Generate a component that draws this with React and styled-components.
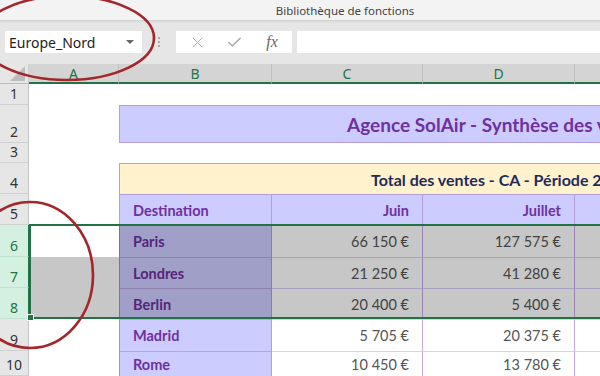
import React from "react";
import styled, { createGlobalStyle, css } from "styled-components";
import { X, Check } from "lucide-react";

const rows = [
  { n: 6, city: "Paris", juin: "66 150 €", juil: "127 575 €" },
  { n: 7, city: "Londres", juin: "21 250 €", juil: "41 280 €" },
  { n: 8, city: "Berlin", juin: "20 400 €", juil: "5 400 €" },
  { n: 9, city: "Madrid", juin: "5 705 €", juil: "20 375 €" },
  { n: 10, city: "Rome", juin: "10 450 €", juil: "13 780 €" },
];

const columns = ["A", "B", "C", "D", ""];
const selectedRows = [6, 7, 8];

const App = () => {
  return (
    <Page>
      <GlobalStyle />
      <TitleBar>Bibliothèque de fonctions</TitleBar>

      <FormulaRow>
        <NameBox>
          <span>Europe_Nord</span>
          <Caret />
        </NameBox>
        <Grip>
          <i />
          <i />
          <i />
        </Grip>
        <FxButtons>
          <IconSlot>
            <X size={17} strokeWidth={1.3} />
          </IconSlot>
          <IconSlot>
            <Check size={17} strokeWidth={2.2} />
          </IconSlot>
          <IconSlot>
            <Fx>fx</Fx>
          </IconSlot>
        </FxButtons>
        <FormulaInput />
      </FormulaRow>

      <SheetStack>
        <Sheet>
          <Corner />
          {columns.map((c, i) => (
            <ColHead key={i} $selected>
              {c}
            </ColHead>
          ))}

          <RowHead>1</RowHead>
          <Blank $span />

          <RowHead>2</RowHead>
          <Blank />
          <TitleCell>Agence SolAir - Synthèse des ventes</TitleCell>

          <RowHead>3</RowHead>
          <Blank $span />

          <RowHead>4</RowHead>
          <Blank />
          <BandCell>Total des ventes - CA - Période 2023</BandCell>

          <RowHead>5</RowHead>
          <Blank />
          <HeadCell $first>Destination</HeadCell>
          <HeadCell $right>Juin</HeadCell>
          <HeadCell $right>Juillet</HeadCell>
          <HeadCell />

          {rows.map((r) => (
            <React.Fragment key={r.n}>
              <RowHead $selected={selectedRows.includes(r.n)}>{r.n}</RowHead>
              <Blank />
              <DestCell>{r.city}</DestCell>
              <ValueCell>{r.juin}</ValueCell>
              <ValueCell>{r.juil}</ValueCell>
              <ValueCell />
            </React.Fragment>
          ))}
        </Sheet>

        <Overlay>
          <Shade $col="2 / 3" $row="8 / 10" />
          <Shade $col="3 / -1" $row="7 / 10" />
          <SelectionFrame />
        </Overlay>
      </SheetStack>

      <Annotations viewBox="0 0 600 376">
        <ellipse cx="67" cy="38" rx="87" ry="42" />
        <ellipse cx="30" cy="275" rx="63" ry="73" />
      </Annotations>
    </Page>
  );
};

const GlobalStyle = createGlobalStyle`
  html, body {
    margin: 0;
    padding: 0;
    background: #ffffff;
    overflow: hidden;
  }
`;

const Page = styled.div`
  position: relative;
  width: 600px;
  height: 376px;
  overflow: hidden;
  font-family: "Noto Sans", "Open Sans", sans-serif;
`;

const TitleBar = styled.div`
  height: 20px;
  background: #f3f3f3;
  color: #444;
  font-size: 11.5px;
  line-height: 22px;
  text-align: center;
  padding-left: 90px;
  box-sizing: border-box;
`;

const FormulaRow = styled.div`
  height: 44px;
  background: #e6e6e6;
  box-shadow: inset 0 3px 3px -2px rgba(0, 0, 0, 0.12);
  display: flex;
  align-items: center;
  padding-left: 5px;
  box-sizing: border-box;
`;

const NameBox = styled.div`
  width: 137px;
  height: 22px;
  background: #fff;
  display: flex;
  align-items: center;
  justify-content: space-between;
  padding: 0 8px 0 4px;
  box-sizing: border-box;
  color: #222;
  font-size: 14px;
`;

const Caret = styled.span`
  width: 0;
  height: 0;
  border-left: 4px solid transparent;
  border-right: 4px solid transparent;
  border-top: 4px solid #666;
`;

const Grip = styled.div`
  width: 34px;
  display: flex;
  flex-direction: column;
  align-items: center;
  gap: 2px;

  i {
    width: 2px;
    height: 2px;
    border-radius: 50%;
    background: #999;
  }
`;

const FxButtons = styled.div`
  width: 116px;
  height: 22px;
  background: #fff;
  display: flex;
  align-items: center;
  justify-content: space-between;
  padding: 0 10px 0 11px;
  box-sizing: border-box;
  color: #a8a8a8;
`;

const IconSlot = styled.span`
  display: flex;
  align-items: center;
  justify-content: center;
  width: 20px;
`;

const Fx = styled.span`
  font-family: "Liberation Serif", serif;
  font-style: italic;
  font-size: 16px;
  color: #666;
`;

const FormulaInput = styled.div`
  flex: 1;
  height: 22px;
  margin-left: 5px;
  background: #fff;
`;

const sheetTemplate = css`
  display: grid;
  grid-template-columns: 29px 90px 153px 151px 152px 1fr;
  grid-template-rows: 20px 21px 38px 20px 31px 31px 32px 31px 31px 32px 25px;
`;

const SheetStack = styled.div`
  display: grid;
  background: #fff;
`;

const Sheet = styled.div`
  ${sheetTemplate}
  grid-area: 1 / 1;
  font-family: "Lato", sans-serif;
`;

const Overlay = styled.div`
  ${sheetTemplate}
  grid-area: 1 / 1;
  pointer-events: none;
`;

const Corner = styled.div`
  background: #e6e6e6;
  border-right: 1px solid #cfcfcf;
  border-bottom: 1px solid #bdbdbd;
  box-sizing: border-box;
  position: relative;

  &::after {
    content: "";
    position: absolute;
    right: 3px;
    bottom: 2px;
    border-left: 15px solid transparent;
    border-bottom: 15px solid #bcbcbc;
  }
`;

const ColHead = styled.div`
  background: ${(p) => (p.$selected ? "#d4d4d4" : "#e6e6e6")};
  color: ${(p) => (p.$selected ? "#217346" : "#444")};
  border-right: 1px solid #c0c0c0;
  border-bottom: 2px solid #217346;
  box-sizing: border-box;
  font-family: "Noto Sans", sans-serif;
  font-size: 14px;
  line-height: 20px;
  text-align: center;
`;

const RowHead = styled.div`
  background: ${(p) => (p.$selected ? "#d3f0e0" : "#e6e6e6")};
  color: ${(p) => (p.$selected ? "#217346" : "#333")};
  border-right: 1px solid ${(p) => (p.$selected ? "#217346" : "#c4c4c4")};
  border-bottom: 1px solid ${(p) => (p.$selected ? "#bfe3cf" : "#d0d0d0")};
  box-sizing: border-box;
  font-family: "Noto Sans", sans-serif;
  font-size: 14px;
  line-height: 1;
  display: flex;
  align-items: flex-end;
  justify-content: center;
  padding-bottom: 3px;
`;

const Blank = styled.div`
  background: #fff;
  grid-column: ${(p) => (p.$span ? "2 / -1" : "auto")};
`;

const TitleCell = styled.div`
  grid-column: 3 / -1;
  background: #ccccff;
  border: 1px solid #b39ddb;
  border-right: none;
  box-sizing: border-box;
  color: #7030a0;
  font-weight: 700;
  font-size: 19px;
  white-space: nowrap;
  overflow: hidden;
  padding-left: 227px;
  display: flex;
  align-items: center;
`;

const BandCell = styled.div`
  grid-column: 3 / -1;
  background: #fff2cc;
  border: 1px solid #b39ddb;
  border-right: none;
  border-bottom: none;
  box-sizing: border-box;
  color: #1f2b5c;
  font-weight: 700;
  font-size: 16px;
  white-space: nowrap;
  overflow: hidden;
  padding-left: 251px;
  display: flex;
  align-items: center;
`;

const HeadCell = styled.div`
  background: #ccccff;
  border-top: 1px solid #b39ddb;
  border-right: 1px solid #b39ddb;
  border-left: ${(p) => (p.$first ? "1px solid #b39ddb" : "none")};
  box-sizing: border-box;
  color: #7030a0;
  font-weight: 700;
  font-size: 14.5px;
  display: flex;
  align-items: center;
  justify-content: ${(p) => (p.$right ? "flex-end" : "flex-start")};
  padding: 0 13px;
  white-space: nowrap;
`;

const DestCell = styled.div`
  background: #ccccff;
  border-left: 1px solid #a98bd6;
  border-right: 1px solid #b39ddb;
  border-top: 1px solid #b9a4e0;
  box-sizing: border-box;
  color: #7030a0;
  font-weight: 700;
  font-size: 14.5px;
  display: flex;
  align-items: center;
  padding-left: 13px;
`;

const ValueCell = styled.div`
  background: #fff;
  border-right: 1px solid #c6a6ea;
  border-top: 1px solid #dccdf2;
  box-sizing: border-box;
  color: #555;
  font-size: 14.5px;
  display: flex;
  align-items: center;
  justify-content: flex-end;
  padding-right: 13px;
  white-space: nowrap;
`;

const Shade = styled.div`
  grid-column: ${(p) => p.$col};
  grid-row: ${(p) => p.$row};
  background: rgba(0, 0, 0, 0.22);
`;

const SelectionFrame = styled.div`
  grid-column: 2 / -1;
  grid-row: 7 / 10;
  border: 2px solid #217346;
  border-right: none;
  margin-top: -1px;
  box-sizing: border-box;
  position: relative;

  &::after {
    content: "";
    position: absolute;
    left: -4px;
    bottom: -4px;
    width: 5px;
    height: 5px;
    background: #217346;
    border: 1px solid #fff;
  }
`;

const Annotations = styled.svg`
  position: absolute;
  left: 0;
  top: 0;
  width: 600px;
  height: 376px;
  pointer-events: none;
  fill: none;
  stroke: #a3262b;
  stroke-width: 2.6;
`;

export default App;
